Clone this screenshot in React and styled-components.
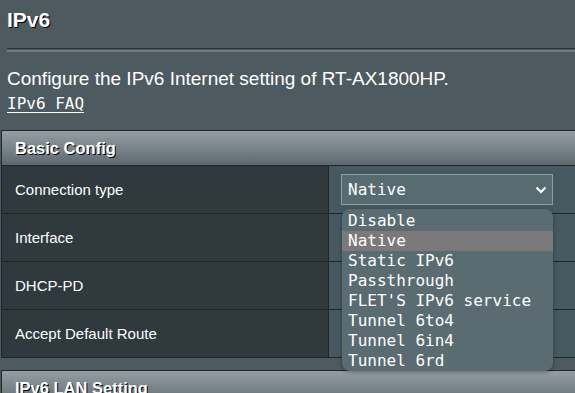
import React from 'react';
import styled, { createGlobalStyle } from 'styled-components';

const GlobalStyle = createGlobalStyle`
  html, body {
    margin: 0;
    padding: 0;
    background: #4d5a5f;
    overflow: hidden;
  }
  body {
    font-family: "Liberation Sans", Arial, sans-serif;
    color: #ffffff;
  }
`;

const Page = styled.div`
  width: 575px;
  height: 393px;
  background: #4d5a5f;
  overflow: hidden;
`;

const Intro = styled.div`
  padding: 0 0 0 7px;
`;

const Title = styled.h1`
  margin: 0;
  padding-top: 8px;
  height: 40px;
  font-size: 21px;
  font-weight: bold;
  line-height: 24px;
  color: #ffffff;
  text-shadow: 1px 1px 0 #000000;
`;

const Divider = styled.div`
  height: 1px;
  background: #2a3337;
  border-bottom: 1px solid #4d5a5f;
  box-shadow: 0 2px 0 #6e7c82;
  margin-bottom: 18px;
`;

const Desc = styled.div`
  font-size: 19px;
  line-height: 20px;
  height: 25px;
  padding-top: 1px;
  white-space: nowrap;
`;

const FaqLink = styled.a`
  display: inline-block;
  font-family: "DejaVu Sans Mono", "Liberation Mono", monospace;
  font-size: 16px;
  line-height: 20px;
  color: #ffffff;
  text-decoration: underline;
  text-decoration-thickness: 1px;
  text-underline-offset: 3px;
`;

const Table = styled.div`
  margin: 16px 0 0 1px;
  border: 1px solid #1f2629;
  border-right: none;
`;

const TableHead = styled.div`
  height: 34px;
  display: flex;
  align-items: center;
  padding-left: 13px;
  font-size: 16.5px;
  font-weight: bold;
  background: linear-gradient(#949ea3, #5e6a70);
  border-bottom: 1px solid #1f2629;
  text-shadow: 1px 1px 0 #000000;
`;

const Row = styled.div`
  display: flex;
  height: 47px;
  border-bottom: 1px solid #1f2629;
  &:last-child {
    border-bottom: none;
  }
`;

const Label = styled.div`
  width: 313px;
  padding-left: 13px;
  display: flex;
  align-items: center;
  font-size: 15px;
  background: #2f393e;
  border-right: 1px solid #1f2629;
`;

const Value = styled.div`
  flex: 1;
  position: relative;
  display: flex;
  align-items: center;
  padding-left: 12px;
  background: #475960;
`;

const Select = styled.div`
  width: 200px;
  height: 29px;
  border: 1px solid #8e9da2;
  background: #576b71;
  display: flex;
  align-items: center;
  justify-content: space-between;
  padding: 0 4px 0 6px;
  box-sizing: content-box;
  font-family: "DejaVu Sans Mono", "Liberation Mono", monospace;
  font-size: 16px;
`;

const Menu = styled.div`
  position: absolute;
  left: 13px;
  top: 43px;
  width: 211px;
  padding-top: 2px;
  background: #5a6c72;
  border-radius: 8px;
  box-shadow: 0 1px 4px rgba(0, 0, 0, 0.35);
  z-index: 5;
  overflow: hidden;
`;

const Option = styled.div`
  height: 20px;
  line-height: 20px;
  padding-left: 6px;
  font-family: "DejaVu Sans Mono", "Liberation Mono", monospace;
  font-size: 16px;
  white-space: pre;
  background: ${(p) => (p.active ? '#7a7a7a' : 'transparent')};
`;

const NextTable = styled.div`
  margin: 12px 0 0 1px;
  border: 1px solid #1f2629;
  border-right: none;
`;

const Chevron = () => (
  <svg width="14" height="14" viewBox="0 0 14 14">
    <path d="M2.5 4.5 L7 9 L11.5 4.5" fill="none" stroke="#ffffff" strokeWidth="2.2" />
  </svg>
);

const options = [
  'Disable',
  'Native',
  'Static IPv6',
  'Passthrough',
  "FLET'S IPv6 service",
  'Tunnel 6to4',
  'Tunnel 6in4',
  'Tunnel 6rd',
];

export default function App() {
  return (
    <Page>
      <GlobalStyle />
      <Intro>
        <Title>IPv6</Title>
        <Divider />
        <Desc>Configure the IPv6 Internet setting of RT-AX1800HP.</Desc>
        <FaqLink>IPv6 FAQ</FaqLink>
      </Intro>
      <Table>
        <TableHead>Basic Config</TableHead>
        <Row>
          <Label>Connection type</Label>
          <Value>
            <Select>
              <span>Native</span>
              <Chevron />
            </Select>
            <Menu>
              {options.map((o) => (
                <Option key={o} active={o === 'Native'}>{o}</Option>
              ))}
            </Menu>
          </Value>
        </Row>
        <Row>
          <Label>Interface</Label>
          <Value />
        </Row>
        <Row>
          <Label>DHCP-PD</Label>
          <Value />
        </Row>
        <Row>
          <Label>Accept Default Route</Label>
          <Value />
        </Row>
      </Table>
      <NextTable>
        <TableHead>IPv6 LAN Setting</TableHead>
      </NextTable>
    </Page>
  );
}
